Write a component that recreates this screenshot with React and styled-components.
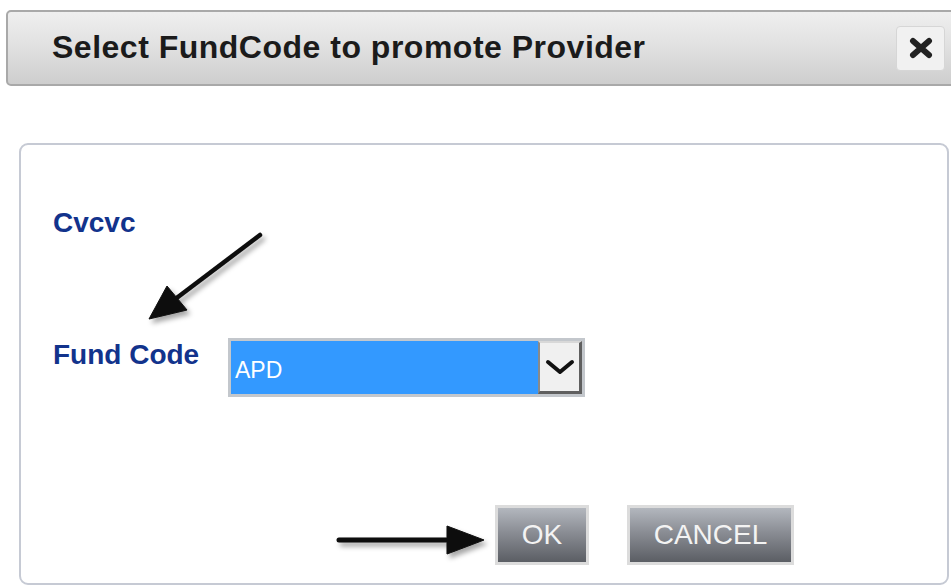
import React from "react";
import styled, { createGlobalStyle } from "styled-components";

const GlobalStyle = createGlobalStyle`
  html, body {
    margin: 0;
    padding: 0;
    background: #ffffff;
    overflow: hidden;
  }
  body {
    font-family: "Liberation Sans", Arial, sans-serif;
  }
`;

const Page = styled.div`
  position: relative;
  width: 951px;
  height: 586px;
  padding: 10px 0 0 6px;
  box-sizing: border-box;
  overflow: hidden;
`;

const TitleBar = styled.header`
  display: flex;
  align-items: center;
  justify-content: space-between;
  height: 76px;
  margin-right: -20px;
  padding: 0 24px 0 44px;
  box-sizing: border-box;
  border: 2px solid #a9a9a9;
  border-radius: 5px;
  background: linear-gradient(to bottom, #efefef 0%, #e0e0e0 50%, #cecece 100%);
`;

const Title = styled.h1`
  margin: 0 0 2px 0;
  font-family: "Liberation Sans", Arial, sans-serif;
  font-weight: 700;
  font-size: 32px;
  letter-spacing: 0.5px;
  color: #1b1b1b;
`;

const CloseButton = styled.button`
  display: flex;
  align-items: center;
  justify-content: center;
  width: 49px;
  height: 45px;
  padding: 0;
  border: 1px solid #d6d6d6;
  border-radius: 4px;
  background: #f1f1f1;
  cursor: pointer;
`;

const Panel = styled.section`
  display: flex;
  flex-direction: column;
  width: 930px;
  height: 442px;
  margin: 57px 0 0 13px;
  padding: 62px 0 0 32px;
  box-sizing: border-box;
  border: 2px solid #c6cad4;
  border-radius: 9px;
  background: #ffffff;
`;

const Label = styled.div`
  font-family: "Liberation Sans", Arial, sans-serif;
  font-weight: 700;
  font-size: 28px;
  line-height: 32px;
  color: #12338c;
  margin-top: ${(p) => p.$offset || 0}px;
  width: ${(p) => (p.$width ? `${p.$width}px` : "auto")};
  flex-shrink: 0;
`;

const FieldRow = styled.div`
  display: flex;
  align-items: flex-start;
  margin-top: 99px;
`;

const SelectBox = styled.div`
  display: flex;
  width: 357px;
  height: 59px;
  box-sizing: border-box;
  border: 3px solid #c3c7cc;
`;

const SelectValue = styled.div`
  flex: 1;
  display: flex;
  align-items: center;
  padding: 5px 0 0 4px;
  box-sizing: border-box;
  background: #3399ff;
  color: #ffffff;
  font-family: "Liberation Sans", Arial, sans-serif;
  font-size: 23px;
`;

const SelectToggle = styled.div`
  display: flex;
  align-items: center;
  justify-content: center;
  width: 44px;
  box-sizing: border-box;
  background: #f0f0f0;
  border-style: solid;
  border-width: 2px 3px 3px 2px;
  border-color: #d8d8d8 #5f5f5f #5f5f5f #8a8a8a;
`;

const ButtonRow = styled.div`
  display: flex;
  gap: 38px;
  margin: 108px 0 0 442px;
`;

const ActionButton = styled.button`
  width: ${(p) => p.$width}px;
  height: 60px;
  padding: 0;
  box-sizing: border-box;
  border: 3px solid #dcdcdc;
  background: linear-gradient(to bottom, #b3b7be 0%, #8a8d94 45%, #5b5e64 100%);
  color: #f3f3f3;
  font-family: "Liberation Sans", Arial, sans-serif;
  font-size: 28px;
  cursor: pointer;
`;

const Annotations = styled.svg`
  position: absolute;
  left: 0;
  top: 0;
  pointer-events: none;
`;

function CloseIcon() {
  return (
    <svg width="26" height="22" viewBox="0 0 26 22">
      <path
        d="M5 4 L21 18 M21 4 L5 18"
        stroke="#222"
        strokeWidth="6"
        strokeLinecap="round"
      />
    </svg>
  );
}

function ChevronIcon() {
  return (
    <svg width="30" height="18" viewBox="0 0 30 18">
      <path
        d="M3 4 L15 14 L27 4"
        fill="none"
        stroke="#111"
        strokeWidth="4"
        strokeLinecap="round"
        strokeLinejoin="round"
      />
    </svg>
  );
}

function Arrows() {
  return (
    <Annotations width="951" height="586" viewBox="0 0 951 586">
      <defs>
        <filter id="arrowShadow" x="-20%" y="-20%" width="140%" height="160%">
          <feDropShadow dx="3" dy="4" stdDeviation="2.5" floodColor="#000" floodOpacity="0.35" />
        </filter>
      </defs>
      <g filter="url(#arrowShadow)" fill="#0a0a0a" stroke="#0a0a0a">
        <line x1="260" y1="235" x2="174" y2="300" strokeWidth="4.5" strokeLinecap="round" />
        <polygon points="149,319 167,286 187,310" strokeWidth="1" strokeLinejoin="round" />
        <line x1="339" y1="540" x2="452" y2="540" strokeWidth="5" strokeLinecap="round" />
        <polygon points="484,540 447,526 447,554" strokeWidth="1" strokeLinejoin="round" />
      </g>
    </Annotations>
  );
}

export default function App() {
  return (
    <>
      <GlobalStyle />
      <Page>
        <TitleBar>
          <Title>Select FundCode to promote Provider</Title>
          <CloseButton aria-label="close">
            <CloseIcon />
          </CloseButton>
        </TitleBar>
        <Panel>
          <Label>Cvcvc</Label>
          <FieldRow>
            <Label $offset={1} $width={175}>Fund Code</Label>
            <SelectBox>
              <SelectValue>APD</SelectValue>
              <SelectToggle>
                <ChevronIcon />
              </SelectToggle>
            </SelectBox>
          </FieldRow>
          <ButtonRow>
            <ActionButton $width={94}>OK</ActionButton>
            <ActionButton $width={167}>CANCEL</ActionButton>
          </ButtonRow>
        </Panel>
        <Arrows />
      </Page>
    </>
  );
}
